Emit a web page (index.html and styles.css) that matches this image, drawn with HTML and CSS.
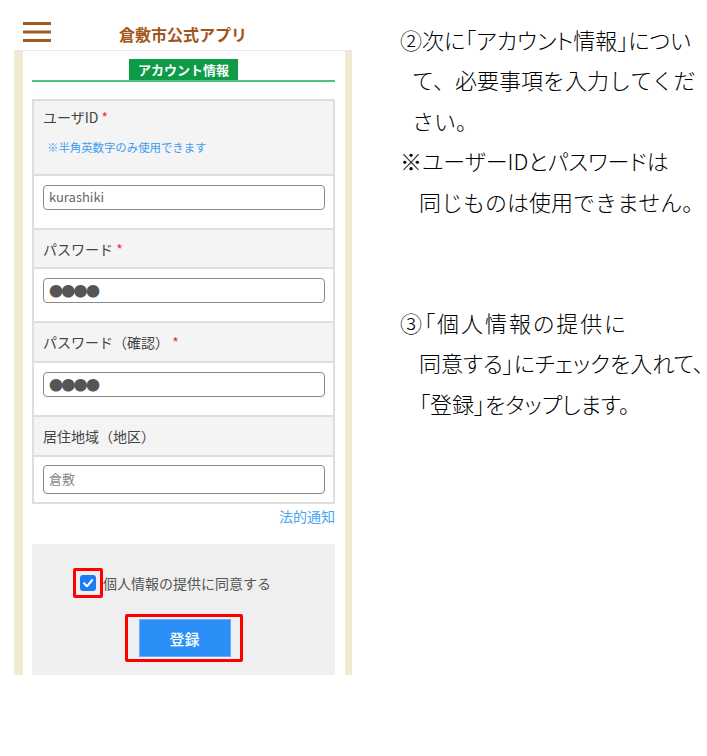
FILE: index.html
```html
<!DOCTYPE html>
<html lang="ja">
<head>
<meta charset="utf-8">
<title>倉敷市公式アプリ</title>
<link rel="stylesheet" href="styles.css">
</head>
<body>
<div class="page">
  <div class="phone">
    <header class="app-header">
      <svg class="menu-icon" width="28" height="20" viewBox="0 0 28 20" aria-hidden="true">
        <rect x="0" y="0" width="28" height="3"/>
        <rect x="0" y="8.5" width="28" height="3"/>
        <rect x="0" y="17" width="28" height="3"/>
      </svg>
      <h1 class="app-title">倉敷市公式アプリ</h1>
    </header>
    <div class="panel">
      <div class="panel-inner">
        <div class="section-head"><span class="section-tab">アカウント情報</span></div>
        <div class="form-table">
          <div class="row label-row first">
            <div class="label">ユーザID <span class="req">*</span></div>
            <div class="note">※半角英数字のみ使用できます</div>
          </div>
          <div class="row field-row"><div class="field">kurashiki</div></div>
          <div class="row label-row h37"><div class="label">パスワード <span class="req">*</span></div></div>
          <div class="row field-row"><div class="field dots">●●●●</div></div>
          <div class="row label-row"><div class="label">パスワード（確認） <span class="req">*</span></div></div>
          <div class="row field-row"><div class="field dots">●●●●</div></div>
          <div class="row label-row"><div class="label">居住地域（地区）</div></div>
          <div class="row field-row last"><div class="field tall placeholder">倉敷</div></div>
        </div>
        <div class="legal"><a class="legal-link">法的通知</a></div>
        <div class="consent-box">
          <div class="consent-row">
            <span class="mark-frame">
              <span class="checkbox">
                <svg width="16" height="16" viewBox="0 0 16 16" aria-hidden="true"><polyline points="4,8.3 7,11.3 12.2,5" fill="none" stroke="#fff" stroke-width="2" stroke-linecap="round" stroke-linejoin="round"/></svg>
              </span>
            </span>
            <span class="consent-label">個人情報の提供に同意する</span>
          </div>
          <div class="submit-frame"><button class="submit" type="button">登録</button></div>
        </div>
      </div>
    </div>
  </div>
  <div class="guide">
    <p class="line prop">②次に「アカウント情報」につい</p>
    <p class="line i1">て、必要事項を入力してくだ</p>
    <p class="line i1">さい。</p>
    <p class="line prop">※ユーザーIDとパスワードは</p>
    <p class="line i2">同じものは使用できません。</p>
    <p class="line gap prop wide">③「個人情報の提供に</p>
    <p class="line prop i2">同意する」にチェックを入れて、</p>
    <p class="line prop i2">「登録」をタップします。</p>
  </div>
</div>
</body>
</html>
```

FILE: styles.css
```css
html, body {
  margin: 0;
  padding: 0;
  background: #ffffff;
}

body {
  font-family: "Noto Sans CJK JP", "Noto Sans", sans-serif;
}

.page {
  display: flex;
  width: 707px;
  height: 756px;
  overflow: hidden;
}

/* ---------- phone screenshot ---------- */
.phone {
  flex: none;
  width: 352px;
}

.app-header {
  height: 50px;
  display: flex;
  align-items: flex-start;
  padding-left: 23px;
  box-sizing: border-box;
}

.menu-icon {
  display: block;
  margin-top: 22px;
  fill: #a15a1b;
}

.app-title {
  margin: 24px 0 0 68px;
  font-size: 16px;
  line-height: 20px;
  font-weight: 700;
  color: #a0561c;
}

.panel {
  margin-left: 14px;
  height: 625px;
  box-sizing: border-box;
  border-top: 1px solid #e9e9e9;
  background: #f3ead4;
  padding: 0 7px 0 9px;
  overflow: hidden;
}

.panel-inner {
  background: #ffffff;
  height: 100%;
  padding: 0 10px 0 9px;
}

.section-head {
  display: flex;
  justify-content: center;
  padding-top: 8px;
  border-bottom: 2px solid #52c182;
}

.section-tab {
  display: block;
  height: 21px;
  line-height: 21px;
  padding: 0 9px;
  background: #0e9b48;
  color: #ffffff;
  font-size: 13px;
  font-weight: 700;
}

.form-table {
  margin-top: 17px;
  border: 2px solid #dedede;
}

.row + .row {
  border-top: 2px solid #dedede;
}

.label-row {
  background: #f4f4f4;
  height: 38px;
  padding: 0 9px;
  display: flex;
  align-items: center;
}

.label-row.h37 {
  height: 37px;
}

.label-row.first {
  height: 73px;
  display: block;
  box-sizing: border-box;
  padding-top: 6px;
}

.label {
  font-size: 14px;
  line-height: 20px;
  color: #444444;
}

.req {
  color: #e8323c;
}

.note {
  margin-top: 12px;
  padding-left: 4px;
  font-size: 11.4px;
  line-height: 16px;
  color: #3c9def;
}

.field-row {
  background: #ffffff;
  padding: 9px 8px 18px 9px;
}

.field-row.last {
  padding: 8px 8px 8px 9px;
}

.field {
  height: 25px;
  box-sizing: border-box;
  border: 1.5px solid #8a8a8a;
  border-radius: 4px;
  padding-left: 5px;
  font-size: 13px;
  line-height: 22px;
  color: #666666;
}

.field.tall {
  height: 29px;
  line-height: 26px;
}

.field.placeholder {
  color: #8a8a8a;
}

.field.dots {
  font-size: 14px;
  letter-spacing: -1.7px;
  color: #555555;
}

.legal {
  margin-top: 2px;
  text-align: right;
  font-size: 14px;
  line-height: 20px;
}

.legal-link {
  color: #4aa4ef;
}

.consent-box {
  margin-top: 18px;
  background: #efefef;
  padding-top: 24px;
  height: 200px;
}

.consent-row {
  display: flex;
  align-items: center;
  padding-left: 41px;
}

.mark-frame {
  flex: none;
  width: 30px;
  height: 30px;
  box-sizing: border-box;
  border: 3px solid #ff0000;
  border-radius: 2px;
  display: flex;
  align-items: center;
  justify-content: center;
}

.checkbox {
  width: 16px;
  height: 16px;
  border-radius: 3px;
  background: #1b7cf3;
  display: block;
}

.checkbox svg {
  display: block;
}

.consent-label {
  font-size: 14px;
  line-height: 20px;
  color: #555555;
}

.submit-frame {
  width: 118px;
  height: 48px;
  box-sizing: border-box;
  margin: 16px auto 0;
  border: 3px solid #ff0000;
  border-radius: 2px;
  padding: 2px 9px 2px 11px;
}

.submit {
  display: block;
  width: 92px;
  height: 38px;
  margin: 0;
  padding: 0;
  background: #2a8ff6;
  border: 1px solid #69aef6;
  color: #ffffff;
  font-family: "Noto Sans CJK JP", sans-serif;
  font-size: 15px;
  font-weight: 500;
}

/* ---------- explanation text ---------- */
.guide {
  flex: none;
  margin-left: 48px;
  padding-top: 19px;
  font-family: "Noto Sans CJK JP", sans-serif;
  font-size: 22px;
  font-weight: 300;
  line-height: 40.4px;
  color: #000000;
}

.line {
  margin: 0;
  white-space: nowrap;
}

.line.prop {
  font-feature-settings: "palt";
}

.line.wide {
  letter-spacing: 2px;
}

.line.i1 {
  padding-left: 12px;
}

.line.i2 {
  padding-left: 19px;
}

.line.gap {
  margin-top: 80.8px;
}
```
